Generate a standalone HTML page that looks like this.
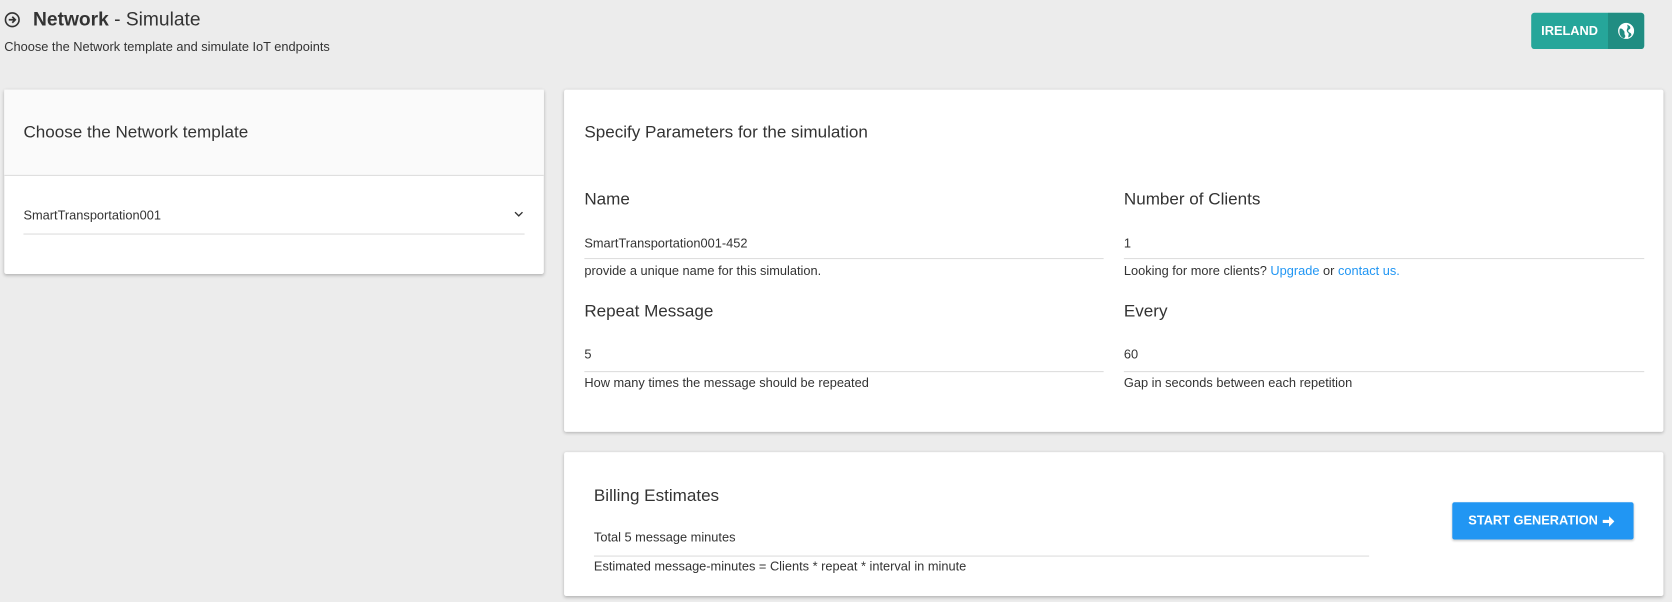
<!DOCTYPE html>
<html><head><style>
html,body{margin:0;width:1672px;height:602px;background:#ececec;overflow:hidden}
#w{position:absolute;left:0;top:0;width:1568px;height:565px;transform:scale(1.0663);transform-origin:0 0;font-family:"Liberation Sans",sans-serif;color:#333}
.a{position:absolute}
.card{position:absolute;background:#fff;box-shadow:0 1px 3px rgba(0,0,0,.25);border-radius:2px}
.lab{position:absolute;font-size:16px;color:#333}
.val{position:absolute;font-size:12px;color:#333}
.line{position:absolute;height:1px;background:#ddd}
.hint{position:absolute;font-size:12px;color:#333}
a{color:#2196f3;text-decoration:none}
</style></head><body><div id="w">
<svg class="a" style="left:4px;top:11px" width="15" height="15" viewBox="0 0 16 16"><circle cx="8" cy="8" r="6.8" fill="none" stroke="#333" stroke-width="1.6"/><path d="M4.5 8h6M8 5l3 3-3 3" fill="none" stroke="#333" stroke-width="1.7"/></svg>
<div class="a" style="left:31px;top:8px;font-size:18px;color:#333"><b>Network</b> - Simulate</div>
<div class="a" style="left:4px;top:37px;font-size:12px">Choose the Network template and simulate IoT endpoints</div>
<div class="a" style="left:1436px;top:12px;width:106px;height:34px;border-radius:3px;background:#26a69a;overflow:hidden">
<div class="a" style="left:0;top:0;width:72px;height:34px;line-height:34px;text-align:center;color:#fff;font-size:12px;font-weight:bold">IRELAND</div>
<div class="a" style="left:72px;top:0;width:34px;height:34px;background:#208d82"></div>
<svg class="a" style="left:81px;top:9px" width="16" height="16" viewBox="0 0 16 16"><circle cx="8" cy="8" r="7.5" fill="#fff"/><path d="M2 6c2-1 3 1 4 2s0 3 1 4-1 3-1 3C3 14 1 11 2 6zM9 2c1 1 3 1 3 3s-2 1-2 3 3 1 3 4c-1 1-2 2-3 2 0-2 1-3 0-4s-2-2-1-4 0-3 0-4z" fill="#208d82"/></svg>
</div>

<div class="card" style="left:4px;top:84px;width:506px;height:173px">
<div class="a" style="left:0;top:0;width:506px;height:80px;background:#fafafa;border-bottom:1px solid #ddd"></div>
<div class="lab" style="left:18px;top:32px">Choose the Network template</div>
<div class="val" style="left:18px;top:111px">SmartTransportation001</div>
<svg class="a" style="left:478px;top:114px" width="9" height="6" viewBox="0 0 9 6"><path d="M1 1l3.5 3.5L8 1" fill="none" stroke="#333" stroke-width="1.3"/></svg>
<div class="line" style="left:18px;top:135px;width:470px"></div>
</div>

<div class="card" style="left:529px;top:84px;width:1031px;height:321px">
<div class="lab" style="left:19px;top:32px">Specify Parameters for the simulation</div>
<div class="lab" style="left:19px;top:95px">Name</div>
<div class="val" style="left:19px;top:137px">SmartTransportation001-452</div>
<div class="line" style="left:19px;top:158px;width:487px"></div>
<div class="hint" style="left:19px;top:163px">provide a unique name for this simulation.</div>
<div class="lab" style="left:525px;top:95px">Number of Clients</div>
<div class="val" style="left:525px;top:137px">1</div>
<div class="line" style="left:525px;top:158px;width:488px"></div>
<div class="hint" style="left:525px;top:163px">Looking for more clients? <a>Upgrade</a> or <a>contact us.</a></div>
<div class="lab" style="left:19px;top:200px">Repeat Message</div>
<div class="val" style="left:19px;top:241px">5</div>
<div class="line" style="left:19px;top:264px;width:487px"></div>
<div class="hint" style="left:19px;top:268px">How many times the message should be repeated</div>
<div class="lab" style="left:525px;top:200px">Every</div>
<div class="val" style="left:525px;top:241px">60</div>
<div class="line" style="left:525px;top:264px;width:488px"></div>
<div class="hint" style="left:525px;top:268px">Gap in seconds between each repetition</div>
</div>

<div class="card" style="left:529px;top:424px;width:1031px;height:135px">
<div class="lab" style="left:28px;top:33px">Billing Estimates</div>
<div class="val" style="left:28px;top:73px">Total 5 message minutes</div>
<div class="line" style="left:28px;top:97px;width:727px"></div>
<div class="hint" style="left:28px;top:100px">Estimated message-minutes = Clients * repeat * interval in minute</div>
<div class="a" style="left:833px;top:47px;width:170px;height:35px;background:#2196f3;border-radius:2px;box-shadow:0 1px 2px rgba(0,0,0,.2);color:#fff;font-size:12px;font-weight:bold;line-height:35px"><span style="margin-left:15px">START GENERATION</span>
<svg class="a" style="left:141px;top:13px" width="11" height="10" viewBox="0 0 11 10"><path d="M0 3.5h6V0l5 5-5 5V6.5H0z" fill="#fff"/></svg></div>
</div>
</div></body></html>
